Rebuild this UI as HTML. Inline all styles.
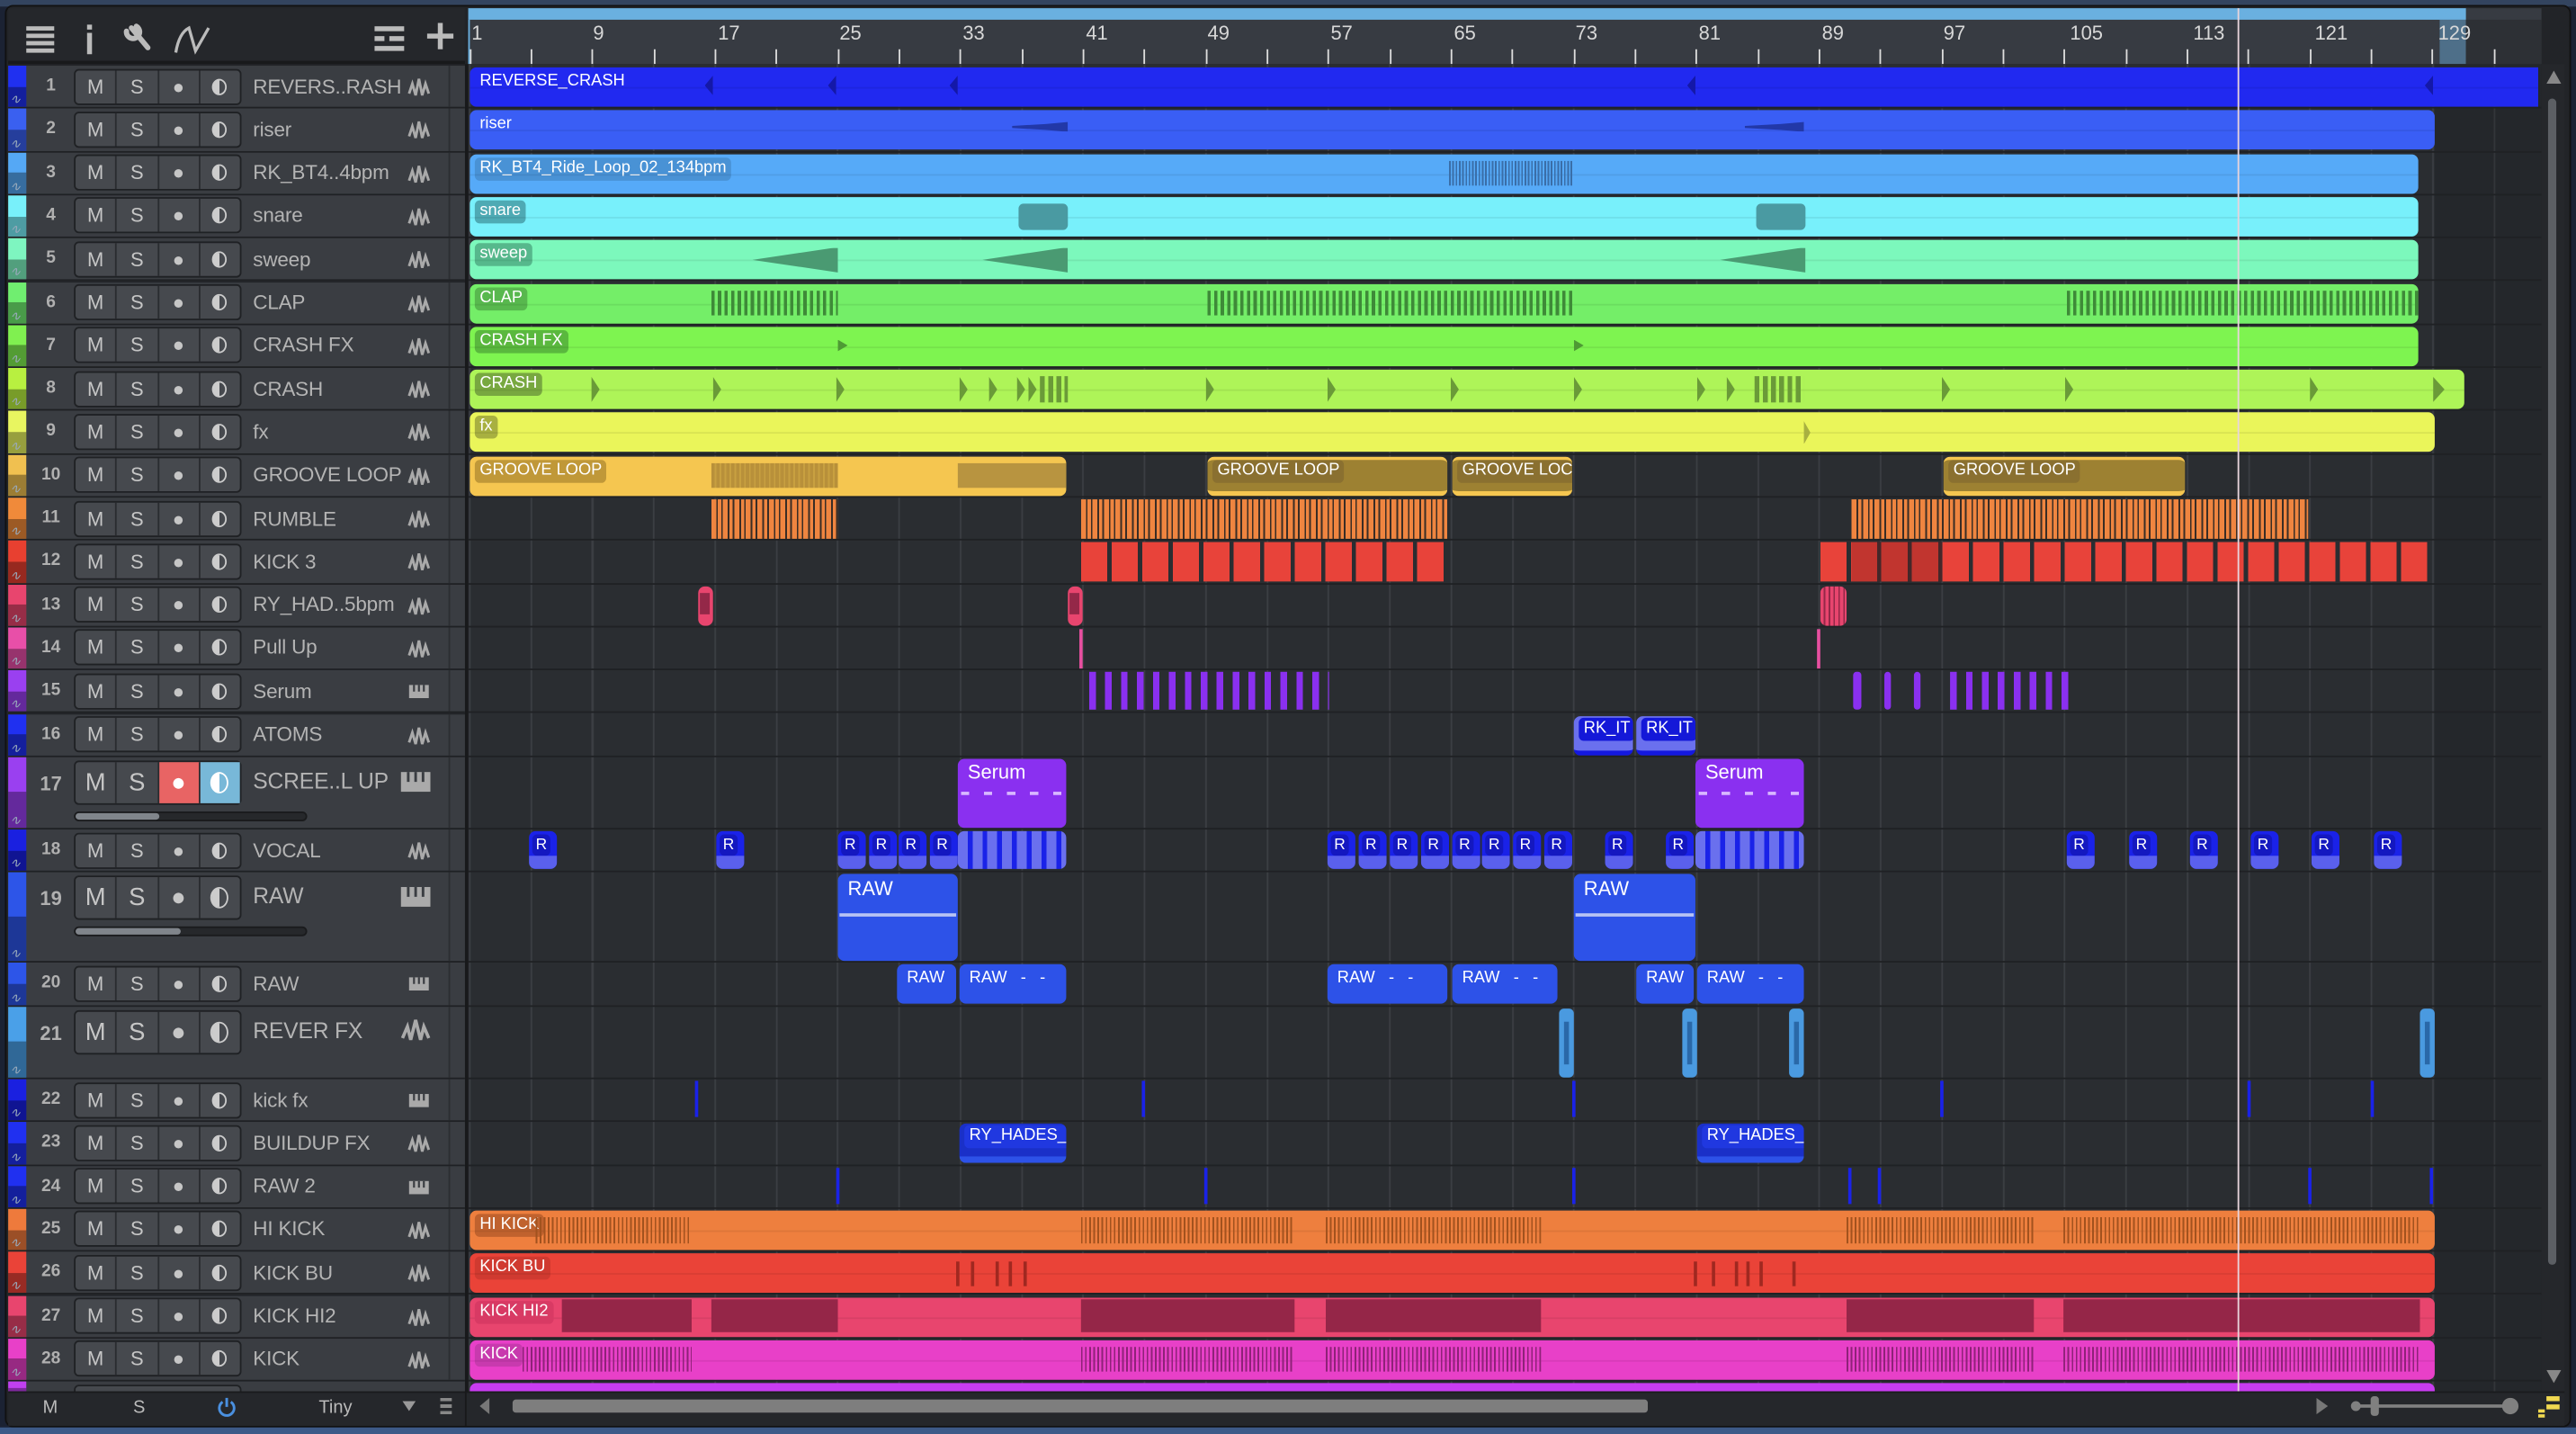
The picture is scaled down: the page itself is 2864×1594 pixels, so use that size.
<!DOCTYPE html>
<html><head><meta charset="utf-8"><style>
*{margin:0;padding:0;box-sizing:border-box}
html,body{width:2864px;height:1594px;overflow:hidden;background:#1b2233}
#s{position:absolute;left:0;top:0;width:1568px;height:873px;transform:scale(1.82653,1.82589);transform-origin:0 0;font-family:"Liberation Sans",sans-serif;overflow:hidden;background:#1b2233}
.a{position:absolute}
.h{position:absolute;left:5px;width:278px;height:26.3px;background:#3a3d42;border-bottom:1.5px solid #1f2124}
.cs{position:absolute;left:0;top:0;width:11px;height:100%}
.cs:after{content:"";position:absolute;left:0;bottom:0;width:11px;height:50%;background:rgba(0,0,0,.35)}
.cs b{position:absolute;left:1px;bottom:0;font-size:8px;color:#9ab;font-weight:normal;z-index:2;transform:skewX(-10deg)}
.n{position:absolute;left:11px;width:30px;top:6px;text-align:center;font-size:10.5px;color:#b0b0b0;font-weight:bold}
.bt{position:absolute;left:40px;top:1.5px;width:102px;height:22px;background:#46494e;border:1px solid #1f2124;border-radius:3px;display:flex}
.bt u{flex:1;text-decoration:none;border-right:1px solid #2a2c30;color:#c6c6c6;font-size:12px;text-align:center;line-height:20px;position:relative}
.bt u:last-child{border-right:0}
.mo{position:absolute;left:50%;top:50%;width:9px;height:10px;margin:-5px 0 0 -4.5px;border:1.4px solid #ccc;border-radius:50%;background:linear-gradient(90deg,#ccc 50%,transparent 50%)}
.big .mo{width:11px;height:13px;margin:-6.5px 0 0 -5.5px}
.nm{position:absolute;left:149px;top:5.5px;font-size:12.3px;color:#b4b4b4;white-space:nowrap;letter-spacing:-0.1px}
.ic{position:absolute;left:243px;top:7px}
.sep{position:absolute;left:268px;top:0;width:1px;height:100%;background:#2c2e32}
.big .bt{height:27px;top:2px}
.big .bt u{font-size:15px;line-height:25px}
.big .nm{font-size:13.5px;top:7px}
.big .n{font-size:12px;top:9px}
.sl{position:absolute;left:40px;width:142px;height:6px;background:#26282b;border:1px solid #1a1b1d;border-radius:3px}
.sl i{position:absolute;left:0;top:0;height:100%;background:#80858b;border-radius:3px}
.rw{position:absolute;left:285px;width:1262px;border-bottom:1.5px solid #1f2124}
.c{position:absolute;border-radius:4px;overflow:hidden}
.l{position:absolute;left:3px;top:2px;font-size:10px;color:#fff;padding:1px 3px;border-radius:3px;background:rgba(0,0,0,.14);white-space:nowrap;line-height:12px}
.w{position:absolute;top:18%;height:64%}
.mid{position:absolute;left:0;right:0;top:50%;height:1px;background:rgba(0,0,0,.07)}
.rul{position:absolute;font-size:12px;color:#d8d8d8;top:13px}
.tk{position:absolute;top:30px;width:1px;height:9px;background:#ddd}
.R{position:absolute;width:17px;height:23px;background:#1a22e8;border-radius:4px;overflow:hidden}
.R:before{content:"R";position:absolute;left:2px;top:2px;width:11px;height:13px;background:#1418c0;border-radius:3px;color:#fff;font-size:9.5px;text-align:center;line-height:13px}
.R:after{content:"";position:absolute;left:0;bottom:0;width:100%;height:8px;background:#6a70ee;opacity:.8}
.vl{position:absolute;width:2px;height:22px;background:#1a22e8}
</style></head><body><div id="s">
<div class="a" style="left:0;top:0;width:1568px;height:4px;background:#33445f"></div>
<div class="a" style="left:3px;top:3px;width:1562px;height:866px;background:#222428;border:1px solid #111;border-radius:5px"></div>
<div class="a" style="left:0;top:869px;width:1568px;height:4px;background:#3d5a88"></div>
<div class="a" style="left:5px;top:5px;width:278px;height:34px;background:#25272b;border-bottom:2px solid #18191b"></div>
<svg class="a" style="left:13px;top:14px" width="240" height="20" viewBox="0 0 240 20">
<g fill="#bbb"><rect x="3" y="2" width="17" height="2.6"/><rect x="3" y="6.5" width="17" height="2.6"/><rect x="3" y="11" width="17" height="2.6"/><rect x="3" y="15.5" width="17" height="2.6"/>
<rect x="40" y="6" width="3" height="13"/><rect x="40" y="1" width="3" height="3"/></g>
<path d="M67 3 L77 15 M64 5 a4 4 0 1 0 6 -3" stroke="#bbb" stroke-width="3.2" fill="none" stroke-linecap="round"/>
<path d="M94 18 Q96 6 102 3 L106 17 L114 3" stroke="#bbb" stroke-width="1.8" fill="none"/>
<g fill="#bbb"><rect x="215" y="2" width="18" height="3"/><rect x="215" y="8" width="6" height="3"/><rect x="224" y="8" width="9" height="3"/><rect x="215" y="14" width="18" height="3"/></g>
</svg>
<svg class="a" style="left:259px;top:13px" width="18" height="18"><path d="M9 1V17M1 9H17" stroke="#bbb" stroke-width="3"/></svg>
<div class="a" style="left:285px;top:5px;width:1262px;height:34px;background:#373b42"></div>
<div class="a" style="left:285px;top:5px;width:1216px;height:7px;background:#6ab0e0"></div>
<div class="a" style="left:285px;top:12px;width:1px;height:27px;background:#6ab0e0"></div>
<div class="a" style="left:1485px;top:12px;width:16px;height:27px;background:rgba(106,176,224,.45)"></div>
<div class="a" style="left:1501px;top:12px;width:46px;height:27px;background:#2d3035"></div>
<div class="rul" style="left:287px">1</div><div class="rul" style="left:361px">9</div><div class="rul" style="left:437px">17</div><div class="rul" style="left:511px">25</div><div class="rul" style="left:586px">33</div><div class="rul" style="left:661px">41</div><div class="rul" style="left:735px">49</div><div class="rul" style="left:810px">57</div><div class="rul" style="left:885px">65</div><div class="rul" style="left:959px">73</div><div class="rul" style="left:1034px">81</div><div class="rul" style="left:1109px">89</div><div class="rul" style="left:1183px">97</div><div class="rul" style="left:1260px">105</div><div class="rul" style="left:1335px">113</div><div class="rul" style="left:1409px">121</div><div class="rul" style="left:1484px">129</div>
<div class="tk" style="left:285.5px"></div><div class="tk" style="left:322.8px"></div><div class="tk" style="left:360.2px"></div><div class="tk" style="left:397.5px"></div><div class="tk" style="left:434.9px"></div><div class="tk" style="left:472.2px"></div><div class="tk" style="left:509.5px"></div><div class="tk" style="left:546.9px"></div><div class="tk" style="left:584.2px"></div><div class="tk" style="left:621.5px"></div><div class="tk" style="left:658.9px"></div><div class="tk" style="left:696.2px"></div><div class="tk" style="left:733.6px"></div><div class="tk" style="left:770.9px"></div><div class="tk" style="left:808.2px"></div><div class="tk" style="left:845.6px"></div><div class="tk" style="left:882.9px"></div><div class="tk" style="left:920.3px"></div><div class="tk" style="left:957.6px"></div><div class="tk" style="left:994.9px"></div><div class="tk" style="left:1032.3px"></div><div class="tk" style="left:1069.6px"></div><div class="tk" style="left:1107px"></div><div class="tk" style="left:1144.3px"></div><div class="tk" style="left:1181.6px"></div><div class="tk" style="left:1219px"></div><div class="tk" style="left:1256.3px"></div><div class="tk" style="left:1293.7px"></div><div class="tk" style="left:1331px"></div><div class="tk" style="left:1368.3px"></div><div class="tk" style="left:1405.7px"></div><div class="tk" style="left:1443px"></div><div class="tk" style="left:1480.4px"></div><div class="tk" style="left:1517.7px"></div>
<div class="a" style="left:285px;top:39px;width:1262px;height:808px;background:#2a2d31 repeating-linear-gradient(90deg,#3b3e43 0 1px,transparent 1px 37.34px);background-position:0.5px 0"></div>
<div class="a" style="left:1482px;top:39px;width:65px;height:808px;background:rgba(0,0,0,.12)"></div>
<div class="a" style="left:283px;top:39px;width:2px;height:808px;background:#18191b"></div>
<div class="rw" style="top:40px;height:26.3px"></div><div class="rw" style="top:66.3px;height:26.3px"></div><div class="rw" style="top:92.6px;height:26.3px"></div><div class="rw" style="top:118.9px;height:26.3px"></div><div class="rw" style="top:145.2px;height:26.3px"></div><div class="rw" style="top:171.5px;height:26.3px"></div><div class="rw" style="top:197.8px;height:26.3px"></div><div class="rw" style="top:224.1px;height:26.3px"></div><div class="rw" style="top:250.4px;height:26.3px"></div><div class="rw" style="top:276.7px;height:26.3px"></div><div class="rw" style="top:303px;height:26.3px"></div><div class="rw" style="top:329.3px;height:26.3px"></div><div class="rw" style="top:355.6px;height:26.3px"></div><div class="rw" style="top:381.9px;height:26.3px"></div><div class="rw" style="top:408.2px;height:26.3px"></div><div class="rw" style="top:434.5px;height:26.3px"></div><div class="rw" style="top:460.8px;height:44.2px"></div><div class="rw" style="top:505px;height:26.3px"></div><div class="rw" style="top:531.3px;height:55px"></div><div class="rw" style="top:586.3px;height:26.3px"></div><div class="rw" style="top:612.6px;height:44.4px"></div><div class="rw" style="top:657px;height:26.3px"></div><div class="rw" style="top:683.3px;height:26.3px"></div><div class="rw" style="top:709.6px;height:26.3px"></div><div class="rw" style="top:735.9px;height:26.3px"></div><div class="rw" style="top:762.2px;height:26.3px"></div><div class="rw" style="top:788.5px;height:26.3px"></div><div class="rw" style="top:814.8px;height:26.3px"></div>

<div class="c" style="left:286px;top:41px;width:1259px;height:24px;background:#2129f0;border-radius:4px 0 0 4px"><span class="l" style="background:none">REVERSE_CRASH</span><i class="mid"></i>
<i class="a" style="left:143px;top:5px;width:5px;height:12px;background:#1418a8;clip-path:polygon(100% 0,0 50%,100% 100%)"></i><i class="a" style="left:218px;top:5px;width:5px;height:12px;background:#1418a8;clip-path:polygon(100% 0,0 50%,100% 100%)"></i><i class="a" style="left:292px;top:5px;width:5px;height:12px;background:#1418a8;clip-path:polygon(100% 0,0 50%,100% 100%)"></i><i class="a" style="left:741px;top:5px;width:5px;height:12px;background:#1418a8;clip-path:polygon(100% 0,0 50%,100% 100%)"></i><i class="a" style="left:1190px;top:5px;width:5px;height:12px;background:#1418a8;clip-path:polygon(100% 0,0 50%,100% 100%)"></i></div>
<div class="c" style="left:286px;top:67.3px;width:1196px;height:24px;background:#3a5ef5"><span class="l" style="background:none">riser</span><i class="mid"></i><i class="a" style="left:330px;top:7px;width:34px;height:6px;background:#2238a8;clip-path:polygon(0 40%,60% 20%,100% 0,100% 100%,60% 80%,0 60%)"></i><i class="a" style="left:776px;top:7px;width:36px;height:6px;background:#2238a8;clip-path:polygon(0 40%,60% 20%,100% 0,100% 100%,60% 80%,0 60%)"></i></div>
<div class="c" style="left:286px;top:93.6px;width:1186px;height:24px;background:#56aaf8"><span class="l">RK_BT4_Ride_Loop_02_134bpm</span><i class="mid"></i><i class="w" style="left:596px;width:76px;background:repeating-linear-gradient(90deg,#3a6ea8 0 1px,transparent 1px 2px)"></i></div>
<div class="c" style="left:286px;top:119.9px;width:1186px;height:24px;background:#78f0fb"><span class="l" style="background:#4eaab4">snare</span><i class="mid"></i><i class="w" style="left:334px;width:30px;background:#4a9aa2;border-radius:3px"></i><i class="w" style="left:783px;width:30px;background:#4a9aa2;border-radius:3px"></i></div>
<div class="c" style="left:286px;top:146.2px;width:1186px;height:24px;background:#7cf8bc"><span class="l" style="background:#56b88c">sweep</span><i class="mid"></i><i class="w" style="left:172px;width:52px;background:#4a9a72;clip-path:polygon(0 50%,100% 0,100% 100%)"></i><i class="w" style="left:312px;width:52px;background:#4a9a72;clip-path:polygon(0 50%,100% 0,100% 100%)"></i><i class="w" style="left:761px;width:52px;background:#4a9a72;clip-path:polygon(0 50%,100% 0,100% 100%)"></i></div>
<div class="c" style="left:286px;top:172.5px;width:1186px;height:24px;background:#74ee68"><span class="l" style="background:#58b84e">CLAP</span><i class="mid"></i><i class="w" style="left:147px;width:77px;background:repeating-linear-gradient(90deg,#3e8a38 0 2px,transparent 2px 4px)"></i><i class="w" style="left:449px;width:223px;background:repeating-linear-gradient(90deg,#3e8a38 0 2px,transparent 2px 4px)"></i><i class="w" style="left:972px;width:214px;background:repeating-linear-gradient(90deg,#3e8a38 0 2px,transparent 2px 4px)"></i></div>
<div class="c" style="left:286px;top:198.8px;width:1186px;height:24px;background:#7ef450"><span class="l" style="background:#5ab83e">CRASH FX</span><i class="mid"></i><i class="a" style="left:224px;top:8px;width:6px;height:7px;background:#4e9a34;clip-path:polygon(0 0,100% 50%,0 100%)"></i><i class="a" style="left:672px;top:8px;width:6px;height:7px;background:#4e9a34;clip-path:polygon(0 0,100% 50%,0 100%)"></i></div>
<div class="c" style="left:286px;top:225.1px;width:1214px;height:24px;background:#aef458"><span class="l" style="background:#78a840">CRASH</span><i class="mid"></i>
<i class="w" style="left:74px;width:5px;background:#6a9a38;clip-path:polygon(0 0,100% 50%,0 100%)"></i><i class="w" style="left:148px;width:5px;background:#6a9a38;clip-path:polygon(0 0,100% 50%,0 100%)"></i><i class="w" style="left:223px;width:5px;background:#6a9a38;clip-path:polygon(0 0,100% 50%,0 100%)"></i><i class="w" style="left:298px;width:5px;background:#6a9a38;clip-path:polygon(0 0,100% 50%,0 100%)"></i><i class="w" style="left:316px;width:5px;background:#6a9a38;clip-path:polygon(0 0,100% 50%,0 100%)"></i><i class="w" style="left:333px;width:5px;background:#6a9a38;clip-path:polygon(0 0,100% 50%,0 100%)"></i><i class="w" style="left:340px;width:5px;background:#6a9a38;clip-path:polygon(0 0,100% 50%,0 100%)"></i><i class="w" style="left:347px;width:17px;background:repeating-linear-gradient(90deg,#6a9a38 0 3px,transparent 3px 5px)"></i><i class="w" style="left:448px;width:5px;background:#6a9a38;clip-path:polygon(0 0,100% 50%,0 100%)"></i><i class="w" style="left:522px;width:5px;background:#6a9a38;clip-path:polygon(0 0,100% 50%,0 100%)"></i><i class="w" style="left:597px;width:5px;background:#6a9a38;clip-path:polygon(0 0,100% 50%,0 100%)"></i><i class="w" style="left:672px;width:5px;background:#6a9a38;clip-path:polygon(0 0,100% 50%,0 100%)"></i><i class="w" style="left:747px;width:5px;background:#6a9a38;clip-path:polygon(0 0,100% 50%,0 100%)"></i><i class="w" style="left:765px;width:5px;background:#6a9a38;clip-path:polygon(0 0,100% 50%,0 100%)"></i><i class="w" style="left:782px;width:30px;background:repeating-linear-gradient(90deg,#6a9a38 0 3px,transparent 3px 5px)"></i><i class="w" style="left:896px;width:5px;background:#6a9a38;clip-path:polygon(0 0,100% 50%,0 100%)"></i><i class="w" style="left:971px;width:5px;background:#6a9a38;clip-path:polygon(0 0,100% 50%,0 100%)"></i><i class="w" style="left:1120px;width:5px;background:#6a9a38;clip-path:polygon(0 0,100% 50%,0 100%)"></i><i class="w" style="left:1195px;width:7px;background:#6a9a38;clip-path:polygon(0 0,100% 50%,0 100%)"></i></div>
<div class="c" style="left:286px;top:251.4px;width:1196px;height:24px;background:#eaf55a"><span class="l" style="background:#a8b040">fx</span><i class="mid"></i><i class="a" style="left:812px;top:5px;width:4px;height:14px;background:#a8b040;clip-path:polygon(0 0,100% 50%,0 100%)"></i></div>
<div class="c" style="left:286px;top:277.7px;width:363px;height:24px;background:#f5c650"><span class="l" style="background:#c09838">GROOVE LOOP</span><i class="w" style="left:147px;width:77px;background:repeating-linear-gradient(90deg,#b8903a 0 2px,#c8a040 2px 3px)"></i><i class="w" style="left:297px;width:66px;background:#b89440"></i></div>
<div class="c" style="left:735px;top:277.7px;width:146px;height:24px;background:#9d8132;border-top:2px solid #f5c650;border-bottom:3px solid #f5c650"><span class="l" style="background:#8a7030;top:0">GROOVE LOOP</span></div>
<div class="c" style="left:884px;top:277.7px;width:73px;height:24px;background:#9d8132;border-top:2px solid #f5c650;border-bottom:3px solid #f5c650"><span class="l" style="background:#8a7030;top:0">GROOVE LOC</span></div>
<div class="c" style="left:1183px;top:277.7px;width:147px;height:24px;background:#9d8132;border-top:2px solid #f5c650;border-bottom:3px solid #f5c650"><span class="l" style="background:#8a7030;top:0">GROOVE LOOP</span></div>
<div class="c" style="left:433px;top:304px;width:77px;height:24px;border-radius:0;background:repeating-linear-gradient(90deg,#ef8540 0 3px,#3a2d25 3px 4px,#ef8540 4px 6px,#3a2d25 6px 7px)"></div>
<div class="c" style="left:658px;top:304px;width:223px;height:24px;border-radius:0;background:repeating-linear-gradient(90deg,#ef8540 0 3px,#3a2d25 3px 4px,#ef8540 4px 6px,#3a2d25 6px 7px)"></div>
<div class="c" style="left:1127px;top:304px;width:278px;height:24px;border-radius:0;background:repeating-linear-gradient(90deg,#ef8540 0 3px,#3a2d25 3px 4px,#ef8540 4px 6px,#3a2d25 6px 7px)"></div>
<div class="c" style="left:658px;top:330.3px;width:223px;height:24px;border-radius:0;background:repeating-linear-gradient(90deg,#e8433a 0 16px,#2a2d31 16px 18.6px)"></div>
<div class="c" style="left:1108px;top:330.3px;width:372px;height:24px;border-radius:0;background:repeating-linear-gradient(90deg,#e8433a 0 16px,#2a2d31 16px 18.6px)"></div>
<div class="c" style="left:1127px;top:330.3px;width:55px;height:24px;border-radius:0;background:rgba(120,30,30,.35)"></div>
<div class="c" style="left:425px;top:356.6px;width:9px;height:24px;background:#e8456e"><i class="a" style="left:1px;top:4px;width:6px;height:13px;background:#942848"></i></div>
<div class="c" style="left:650px;top:356.6px;width:9px;height:24px;background:#e8456e"><i class="a" style="left:1px;top:4px;width:6px;height:13px;background:#942848"></i></div>
<div class="c" style="left:1108px;top:356.6px;width:16px;height:24px;background:repeating-linear-gradient(90deg,#e8456e 0 2px,#942848 2px 3px)"></div>
<div class="a" style="left:657px;top:383px;width:2px;height:24px;background:#e84fa0"></div>
<div class="a" style="left:1106px;top:383px;width:2px;height:24px;background:#e84fa0"></div>
<div class="a" style="left:663px;top:409.2px;width:146px;height:23px;background:repeating-linear-gradient(90deg,#8a30f0 0 4px,transparent 4px 9.7px)"></div>
<div class="a" style="left:1128px;top:409.2px;width:5px;height:23px;background:#8a30f0;border-radius:2px"></div>
<div class="a" style="left:1147px;top:409.2px;width:4px;height:23px;background:#8a30f0;border-radius:2px"></div>
<div class="a" style="left:1165px;top:409.2px;width:4px;height:23px;background:#8a30f0;border-radius:2px"></div>
<div class="a" style="left:1187px;top:409.2px;width:72px;height:23px;background:repeating-linear-gradient(90deg,#8a30f0 0 4px,transparent 4px 9.7px)"></div>
<div class="c" style="left:958px;top:435.5px;width:36px;height:24px;background:#6a70ee;border-bottom:3px solid #1418e0"><span class="l" style="background:#1418d8;top:1px;font-size:10px">RK_IT</span></div>
<div class="c" style="left:996px;top:435.5px;width:36px;height:24px;background:#6a70ee;border-bottom:3px solid #1418e0"><span class="l" style="background:#1418d8;top:1px;font-size:10px">RK_IT</span></div>
<div class="c" style="left:583px;top:461.8px;width:66px;height:42px;background:#8a30f0"><span class="l" style="background:none;font-size:12px;top:1px">Serum</span><i class="a" style="left:2px;top:20px;width:62px;height:2px;background:repeating-linear-gradient(90deg,#d8b8ff 0 5px,transparent 5px 14px)"></i></div>
<div class="c" style="left:1032px;top:461.8px;width:66px;height:42px;background:#8a30f0"><span class="l" style="background:none;font-size:12px;top:1px">Serum</span><i class="a" style="left:2px;top:20px;width:62px;height:2px;background:repeating-linear-gradient(90deg,#d8b8ff 0 5px,transparent 5px 14px)"></i></div>
<div class="R" style="left:322px;top:506px"></div><div class="R" style="left:436px;top:506px"></div><div class="R" style="left:510px;top:506px"></div><div class="R" style="left:529px;top:506px"></div><div class="R" style="left:547px;top:506px"></div><div class="R" style="left:566px;top:506px"></div>
<div class="c" style="left:583px;top:506px;width:66px;height:23px;background:repeating-linear-gradient(90deg,#6a70ee 0 6px,#1a22e8 6px 9px)"></div>
<div class="R" style="left:808px;top:506px"></div><div class="R" style="left:827px;top:506px"></div><div class="R" style="left:846px;top:506px"></div><div class="R" style="left:865px;top:506px"></div><div class="R" style="left:884px;top:506px"></div><div class="R" style="left:902px;top:506px"></div><div class="R" style="left:921px;top:506px"></div><div class="R" style="left:940px;top:506px"></div><div class="R" style="left:977px;top:506px"></div><div class="R" style="left:1014px;top:506px"></div>
<div class="c" style="left:1032px;top:506px;width:66px;height:23px;background:repeating-linear-gradient(90deg,#6a70ee 0 6px,#1a22e8 6px 9px)"></div>
<div class="R" style="left:1258px;top:506px"></div><div class="R" style="left:1296px;top:506px"></div><div class="R" style="left:1333px;top:506px"></div><div class="R" style="left:1370px;top:506px"></div><div class="R" style="left:1407px;top:506px"></div><div class="R" style="left:1445px;top:506px"></div>
<div class="c" style="left:510px;top:532.3px;width:73px;height:53px;background:#2d52e8"><span class="l" style="background:none;font-size:12px;top:2px;left:3px">RAW</span><i class="a" style="left:1px;top:24px;width:71px;height:2px;background:#b8c4f4"></i></div>
<div class="c" style="left:958px;top:532.3px;width:74px;height:53px;background:#2d52e8"><span class="l" style="background:none;font-size:12px;top:2px;left:3px">RAW</span><i class="a" style="left:1px;top:24px;width:72px;height:2px;background:#b8c4f4"></i></div>
<div class="c" style="left:546px;top:587.3px;width:36px;height:24px;background:#2d52e8"><span class="l" style="background:none">RAW</span></div>
<div class="c" style="left:584px;top:587.3px;width:65px;height:24px;background:#2d52e8"><span class="l" style="background:none">RAW &nbsp;&nbsp;-&nbsp;&nbsp;&nbsp;-</span></div>
<div class="c" style="left:808px;top:587.3px;width:73px;height:24px;background:#2d52e8"><span class="l" style="background:none">RAW &nbsp;&nbsp;-&nbsp;&nbsp;&nbsp;-</span></div>
<div class="c" style="left:884px;top:587.3px;width:64px;height:24px;background:#2d52e8"><span class="l" style="background:none">RAW &nbsp;&nbsp;-&nbsp;&nbsp;&nbsp;-</span></div>
<div class="c" style="left:996px;top:587.3px;width:35px;height:24px;background:#2d52e8"><span class="l" style="background:none">RAW</span></div>
<div class="c" style="left:1033px;top:587.3px;width:65px;height:24px;background:#2d52e8"><span class="l" style="background:none">RAW &nbsp;&nbsp;-&nbsp;&nbsp;&nbsp;-</span></div>
<div class="c" style="left:949px;top:614px;width:9px;height:42px;background:#4a9ae0;border-radius:3px"><i class="a" style="left:3px;top:8px;width:3px;height:26px;background:#2a68a8"></i></div>
<div class="c" style="left:1024px;top:614px;width:9px;height:42px;background:#4a9ae0;border-radius:3px"><i class="a" style="left:3px;top:8px;width:3px;height:26px;background:#2a68a8"></i></div>
<div class="c" style="left:1089px;top:614px;width:9px;height:42px;background:#4a9ae0;border-radius:3px"><i class="a" style="left:3px;top:8px;width:3px;height:26px;background:#2a68a8"></i></div>
<div class="c" style="left:1473px;top:614px;width:9px;height:42px;background:#4a9ae0;border-radius:3px"><i class="a" style="left:3px;top:8px;width:3px;height:26px;background:#2a68a8"></i></div>
<div class="vl" style="left:423px;top:658px"></div><div class="vl" style="left:695px;top:658px"></div><div class="vl" style="left:957px;top:658px"></div><div class="vl" style="left:1181px;top:658px"></div><div class="vl" style="left:1368px;top:658px"></div><div class="vl" style="left:1443px;top:658px"></div>
<div class="c" style="left:584px;top:684.3px;width:65px;height:24px;background:#1a30c8;border-bottom:4px solid #2d52e8"><span class="l" style="background:#2038e0;top:1px">RY_HADES_</span></div>
<div class="c" style="left:1033px;top:684.3px;width:65px;height:24px;background:#1a30c8;border-bottom:4px solid #2d52e8"><span class="l" style="background:#2038e0;top:1px">RY_HADES_</span></div>
<div class="vl" style="left:509px;top:711px"></div><div class="vl" style="left:733px;top:711px"></div><div class="vl" style="left:957px;top:711px"></div><div class="vl" style="left:1125px;top:711px"></div><div class="vl" style="left:1143px;top:711px"></div><div class="vl" style="left:1405px;top:711px"></div><div class="vl" style="left:1479px;top:711px"></div>
<div class="c" style="left:286px;top:736.9px;width:1196px;height:24px;background:#ee7f3e"><span class="l" style="background:#c0622e">HI KICK</span><i class="mid"></i>
<i class="w" style="left:40px;width:95px;background:repeating-linear-gradient(90deg,#a2521e 0 1px,transparent 1px 2.5px)"></i><i class="w" style="left:372px;width:130px;background:repeating-linear-gradient(90deg,#a2521e 0 1px,transparent 1px 2.5px)"></i><i class="w" style="left:521px;width:131px;background:repeating-linear-gradient(90deg,#a2521e 0 1px,transparent 1px 2.5px)"></i><i class="w" style="left:838px;width:114px;background:repeating-linear-gradient(90deg,#a2521e 0 1px,transparent 1px 2.5px)"></i><i class="w" style="left:970px;width:217px;background:repeating-linear-gradient(90deg,#a2521e 0 1px,transparent 1px 2.5px)"></i></div>
<div class="c" style="left:286px;top:763.2px;width:1196px;height:24px;background:#ea4338"><span class="l" style="background:#d03a30">KICK BU</span><i class="mid"></i>
<i class="w" style="left:296px;width:2px;background:#a02820"></i><i class="w" style="left:305px;width:2px;background:#a02820"></i><i class="w" style="left:320px;width:2px;background:#a02820"></i><i class="w" style="left:328px;width:2px;background:#a02820"></i><i class="w" style="left:337px;width:2px;background:#a02820"></i><i class="w" style="left:745px;width:2px;background:#a02820"></i><i class="w" style="left:756px;width:2px;background:#a02820"></i><i class="w" style="left:770px;width:2px;background:#a02820"></i><i class="w" style="left:777px;width:2px;background:#a02820"></i><i class="w" style="left:785px;width:2px;background:#a02820"></i><i class="w" style="left:805px;width:2px;background:#a02820"></i></div>
<div class="c" style="left:286px;top:789.5px;width:1196px;height:24px;background:#e8456e"><i class="mid"></i>
<i class="w" style="left:56px;width:79px;background:#952648;top:8%;height:80%"></i><i class="w" style="left:147px;width:77px;background:#952648;top:8%;height:80%"></i><i class="w" style="left:372px;width:130px;background:#952648;top:8%;height:80%"></i><i class="w" style="left:521px;width:131px;background:#952648;top:8%;height:80%"></i><i class="w" style="left:838px;width:114px;background:#952648;top:8%;height:80%"></i><i class="w" style="left:970px;width:217px;background:#952648;top:8%;height:80%"></i><span class="l" style="background:#d83a64">KICK HI2</span></div>
<div class="c" style="left:286px;top:815.8px;width:1196px;height:24px;background:#e840c8"><span class="l" style="background:#c83aae">KICK</span><i class="mid"></i>
<i class="w" style="left:32px;width:103px;background:repeating-linear-gradient(90deg,#8e2278 0 1px,transparent 1px 2.5px)"></i><i class="w" style="left:372px;width:130px;background:repeating-linear-gradient(90deg,#8e2278 0 1px,transparent 1px 2.5px)"></i><i class="w" style="left:521px;width:131px;background:repeating-linear-gradient(90deg,#8e2278 0 1px,transparent 1px 2.5px)"></i><i class="w" style="left:838px;width:114px;background:repeating-linear-gradient(90deg,#8e2278 0 1px,transparent 1px 2.5px)"></i><i class="w" style="left:970px;width:217px;background:repeating-linear-gradient(90deg,#8e2278 0 1px,transparent 1px 2.5px)"></i></div>
<div class="c" style="left:286px;top:842px;width:1196px;height:10px;background:#c83cf0"></div>
<div class="a" style="left:1361.5px;top:5px;width:1px;height:842px;background:#e8d4dc"></div>
<div class="a" style="left:1547px;top:39px;width:14px;height:808px;background:#25272b"></div>
<div class="a" style="left:1550px;top:43px;width:9px;height:8px;background:#888;clip-path:polygon(50% 0,100% 100%,0 100%)"></div>
<div class="a" style="left:1551px;top:60px;width:5px;height:710px;background:#5c5f64;border-radius:3px"></div>
<div class="a" style="left:1550px;top:834px;width:9px;height:8px;background:#888;clip-path:polygon(0 0,100% 0,50% 100%)"></div>

<div class="h" style="top:40px"><i class="cs" style="background:#2030f0"><b>∿</b></i><b class="n">1</b><span class="bt"><u>M</u><u>S</u><u>●</u><u><i class="mo"></i></u></span><span class="nm">REVERS..RASH</span><svg class="ic" width="14" height="12"><path d="M1 10L3 4L5 11L7 1L9 11L11 4L13 10" stroke="#aaa" fill="none" stroke-width="1.6"/></svg><i class="sep"></i></div>
<div class="h" style="top:66.3px"><i class="cs" style="background:#3a60f0"><b>∿</b></i><b class="n">2</b><span class="bt"><u>M</u><u>S</u><u>●</u><u><i class="mo"></i></u></span><span class="nm">riser</span><svg class="ic" width="14" height="12"><path d="M1 10L3 4L5 11L7 1L9 11L11 4L13 10" stroke="#aaa" fill="none" stroke-width="1.6"/></svg><i class="sep"></i></div>
<div class="h" style="top:92.6px"><i class="cs" style="background:#55a8f5"><b>∿</b></i><b class="n">3</b><span class="bt"><u>M</u><u>S</u><u>●</u><u><i class="mo"></i></u></span><span class="nm">RK_BT4..4bpm</span><svg class="ic" width="14" height="12"><path d="M1 10L3 4L5 11L7 1L9 11L11 4L13 10" stroke="#aaa" fill="none" stroke-width="1.6"/></svg><i class="sep"></i></div>
<div class="h" style="top:118.9px"><i class="cs" style="background:#78f0fa"><b>∿</b></i><b class="n">4</b><span class="bt"><u>M</u><u>S</u><u>●</u><u><i class="mo"></i></u></span><span class="nm">snare</span><svg class="ic" width="14" height="12"><path d="M1 10L3 4L5 11L7 1L9 11L11 4L13 10" stroke="#aaa" fill="none" stroke-width="1.6"/></svg><i class="sep"></i></div>
<div class="h" style="top:145.2px"><i class="cs" style="background:#7ef5c0"><b>∿</b></i><b class="n">5</b><span class="bt"><u>M</u><u>S</u><u>●</u><u><i class="mo"></i></u></span><span class="nm">sweep</span><svg class="ic" width="14" height="12"><path d="M1 10L3 4L5 11L7 1L9 11L11 4L13 10" stroke="#aaa" fill="none" stroke-width="1.6"/></svg><i class="sep"></i></div>
<div class="h" style="top:171.5px"><i class="cs" style="background:#70ee70"><b>∿</b></i><b class="n">6</b><span class="bt"><u>M</u><u>S</u><u>●</u><u><i class="mo"></i></u></span><span class="nm">CLAP</span><svg class="ic" width="14" height="12"><path d="M1 10L3 4L5 11L7 1L9 11L11 4L13 10" stroke="#aaa" fill="none" stroke-width="1.6"/></svg><i class="sep"></i></div>
<div class="h" style="top:197.8px"><i class="cs" style="background:#80f050"><b>∿</b></i><b class="n">7</b><span class="bt"><u>M</u><u>S</u><u>●</u><u><i class="mo"></i></u></span><span class="nm">CRASH FX</span><svg class="ic" width="14" height="12"><path d="M1 10L3 4L5 11L7 1L9 11L11 4L13 10" stroke="#aaa" fill="none" stroke-width="1.6"/></svg><i class="sep"></i></div>
<div class="h" style="top:224.1px"><i class="cs" style="background:#b8f040"><b>∿</b></i><b class="n">8</b><span class="bt"><u>M</u><u>S</u><u>●</u><u><i class="mo"></i></u></span><span class="nm">CRASH</span><svg class="ic" width="14" height="12"><path d="M1 10L3 4L5 11L7 1L9 11L11 4L13 10" stroke="#aaa" fill="none" stroke-width="1.6"/></svg><i class="sep"></i></div>
<div class="h" style="top:250.4px"><i class="cs" style="background:#e8f560"><b>∿</b></i><b class="n">9</b><span class="bt"><u>M</u><u>S</u><u>●</u><u><i class="mo"></i></u></span><span class="nm">fx</span><svg class="ic" width="14" height="12"><path d="M1 10L3 4L5 11L7 1L9 11L11 4L13 10" stroke="#aaa" fill="none" stroke-width="1.6"/></svg><i class="sep"></i></div>
<div class="h" style="top:276.7px"><i class="cs" style="background:#f0c050"><b>∿</b></i><b class="n">10</b><span class="bt"><u>M</u><u>S</u><u>●</u><u><i class="mo"></i></u></span><span class="nm">GROOVE LOOP</span><svg class="ic" width="14" height="12"><path d="M1 10L3 4L5 11L7 1L9 11L11 4L13 10" stroke="#aaa" fill="none" stroke-width="1.6"/></svg><i class="sep"></i></div>
<div class="h" style="top:303px"><i class="cs" style="background:#f08a3a"><b>∿</b></i><b class="n">11</b><span class="bt"><u>M</u><u>S</u><u>●</u><u><i class="mo"></i></u></span><span class="nm">RUMBLE</span><svg class="ic" width="14" height="12"><path d="M1 10L3 4L5 11L7 1L9 11L11 4L13 10" stroke="#aaa" fill="none" stroke-width="1.6"/></svg><i class="sep"></i></div>
<div class="h" style="top:329.3px"><i class="cs" style="background:#e84030"><b>∿</b></i><b class="n">12</b><span class="bt"><u>M</u><u>S</u><u>●</u><u><i class="mo"></i></u></span><span class="nm">KICK 3</span><svg class="ic" width="14" height="12"><path d="M1 10L3 4L5 11L7 1L9 11L11 4L13 10" stroke="#aaa" fill="none" stroke-width="1.6"/></svg><i class="sep"></i></div>
<div class="h" style="top:355.6px"><i class="cs" style="background:#e8456e"><b>∿</b></i><b class="n">13</b><span class="bt"><u>M</u><u>S</u><u>●</u><u><i class="mo"></i></u></span><span class="nm">RY_HAD..5bpm</span><svg class="ic" width="14" height="12"><path d="M1 10L3 4L5 11L7 1L9 11L11 4L13 10" stroke="#aaa" fill="none" stroke-width="1.6"/></svg><i class="sep"></i></div>
<div class="h" style="top:381.9px"><i class="cs" style="background:#e84fa8"><b>∿</b></i><b class="n">14</b><span class="bt"><u>M</u><u>S</u><u>●</u><u><i class="mo"></i></u></span><span class="nm">Pull Up</span><svg class="ic" width="14" height="12"><path d="M1 10L3 4L5 11L7 1L9 11L11 4L13 10" stroke="#aaa" fill="none" stroke-width="1.6"/></svg><i class="sep"></i></div>
<div class="h" style="top:408.2px"><i class="cs" style="background:#9a40f0"><b>∿</b></i><b class="n">15</b><span class="bt"><u>M</u><u>S</u><u>●</u><u><i class="mo"></i></u></span><span class="nm">Serum</span><svg class="ic" width="14" height="12"><rect x="1" y="2" width="12" height="8" fill="#aaa"/><path d="M4 2V6M7 2V6M10 2V6" stroke="#3a3d42" stroke-width="1.2"/></svg><i class="sep"></i></div>
<div class="h" style="top:434.5px"><i class="cs" style="background:#2030f0"><b>∿</b></i><b class="n">16</b><span class="bt"><u>M</u><u>S</u><u>●</u><u><i class="mo"></i></u></span><span class="nm">ATOMS</span><svg class="ic" width="14" height="12"><path d="M1 10L3 4L5 11L7 1L9 11L11 4L13 10" stroke="#aaa" fill="none" stroke-width="1.6"/></svg><i class="sep"></i></div>
<div class="h big" style="top:460.8px;height:44.2px"><i class="cs" style="background:#9a40f0"><b>∿</b></i><b class="n">17</b><span class="bt"><u>M</u><u>S</u><u style="background:#e86464;color:#fff">●</u><u style="background:#78b8d8"><i class="mo" style="border-color:#fff;background:linear-gradient(90deg,#fff 50%,transparent 50%)"></i></u></span><span class="nm">SCREE..L UP</span><svg class="ic" width="18" height="14" style="left:239px;top:8px"><rect x="0" y="1" width="18" height="12" fill="#aaa"/><path d="M4.5 1V7M9 1V7M13.5 1V7" stroke="#3a3d42" stroke-width="1.6"/></svg><div class="sl" style="top:33px"><i style="width:51px"></i></div><i class="sep"></i></div>
<div class="h" style="top:505px"><i class="cs" style="background:#1a20e0"><b>∿</b></i><b class="n">18</b><span class="bt"><u>M</u><u>S</u><u>●</u><u><i class="mo"></i></u></span><span class="nm">VOCAL</span><svg class="ic" width="14" height="12"><path d="M1 10L3 4L5 11L7 1L9 11L11 4L13 10" stroke="#aaa" fill="none" stroke-width="1.6"/></svg><i class="sep"></i></div>
<div class="h big" style="top:531.3px;height:55px"><i class="cs" style="background:#2d55e8"><b>∿</b></i><b class="n">19</b><span class="bt"><u>M</u><u>S</u><u>●</u><u><i class="mo"></i></u></span><span class="nm">RAW</span><svg class="ic" width="18" height="14" style="left:239px;top:8px"><rect x="0" y="1" width="18" height="12" fill="#aaa"/><path d="M4.5 1V7M9 1V7M13.5 1V7" stroke="#3a3d42" stroke-width="1.6"/></svg><div class="sl" style="top:33px"><i style="width:64px"></i></div><i class="sep"></i></div>
<div class="h" style="top:586.3px"><i class="cs" style="background:#2d55e8"><b>∿</b></i><b class="n">20</b><span class="bt"><u>M</u><u>S</u><u>●</u><u><i class="mo"></i></u></span><span class="nm">RAW</span><svg class="ic" width="14" height="12"><rect x="1" y="2" width="12" height="8" fill="#aaa"/><path d="M4 2V6M7 2V6M10 2V6" stroke="#3a3d42" stroke-width="1.2"/></svg><i class="sep"></i></div>
<div class="h big" style="top:612.6px;height:44.4px"><i class="cs" style="background:#4aa0e8"><b>∿</b></i><b class="n">21</b><span class="bt"><u>M</u><u>S</u><u>●</u><u><i class="mo"></i></u></span><span class="nm">REVER FX</span><svg class="ic" width="18" height="14" style="left:239px;top:7px"><path d="M1 12L4 5L6 13L9 1L12 13L14 5L17 12" stroke="#aaa" fill="none" stroke-width="2"/></svg><i class="sep"></i></div>
<div class="h" style="top:657px"><i class="cs" style="background:#1a20e0"><b>∿</b></i><b class="n">22</b><span class="bt"><u>M</u><u>S</u><u>●</u><u><i class="mo"></i></u></span><span class="nm">kick fx</span><svg class="ic" width="14" height="12"><rect x="1" y="2" width="12" height="8" fill="#aaa"/><path d="M4 2V6M7 2V6M10 2V6" stroke="#3a3d42" stroke-width="1.2"/></svg><i class="sep"></i></div>
<div class="h" style="top:683.3px"><i class="cs" style="background:#2030f0"><b>∿</b></i><b class="n">23</b><span class="bt"><u>M</u><u>S</u><u>●</u><u><i class="mo"></i></u></span><span class="nm">BUILDUP FX</span><svg class="ic" width="14" height="12"><path d="M1 10L3 4L5 11L7 1L9 11L11 4L13 10" stroke="#aaa" fill="none" stroke-width="1.6"/></svg><i class="sep"></i></div>
<div class="h" style="top:709.6px"><i class="cs" style="background:#2030f0"><b>∿</b></i><b class="n">24</b><span class="bt"><u>M</u><u>S</u><u>●</u><u><i class="mo"></i></u></span><span class="nm">RAW 2</span><svg class="ic" width="14" height="12"><rect x="1" y="2" width="12" height="8" fill="#aaa"/><path d="M4 2V6M7 2V6M10 2V6" stroke="#3a3d42" stroke-width="1.2"/></svg><i class="sep"></i></div>
<div class="h" style="top:735.9px"><i class="cs" style="background:#ee7a3c"><b>∿</b></i><b class="n">25</b><span class="bt"><u>M</u><u>S</u><u>●</u><u><i class="mo"></i></u></span><span class="nm">HI KICK</span><svg class="ic" width="14" height="12"><path d="M1 10L3 4L5 11L7 1L9 11L11 4L13 10" stroke="#aaa" fill="none" stroke-width="1.6"/></svg><i class="sep"></i></div>
<div class="h" style="top:762.2px"><i class="cs" style="background:#ea4338"><b>∿</b></i><b class="n">26</b><span class="bt"><u>M</u><u>S</u><u>●</u><u><i class="mo"></i></u></span><span class="nm">KICK BU</span><svg class="ic" width="14" height="12"><path d="M1 10L3 4L5 11L7 1L9 11L11 4L13 10" stroke="#aaa" fill="none" stroke-width="1.6"/></svg><i class="sep"></i></div>
<div class="h" style="top:788.5px"><i class="cs" style="background:#e8456e"><b>∿</b></i><b class="n">27</b><span class="bt"><u>M</u><u>S</u><u>●</u><u><i class="mo"></i></u></span><span class="nm">KICK HI2</span><svg class="ic" width="14" height="12"><path d="M1 10L3 4L5 11L7 1L9 11L11 4L13 10" stroke="#aaa" fill="none" stroke-width="1.6"/></svg><i class="sep"></i></div>
<div class="h" style="top:814.8px"><i class="cs" style="background:#e840c8"><b>∿</b></i><b class="n">28</b><span class="bt"><u>M</u><u>S</u><u>●</u><u><i class="mo"></i></u></span><span class="nm">KICK</span><svg class="ic" width="14" height="12"><path d="M1 10L3 4L5 11L7 1L9 11L11 4L13 10" stroke="#aaa" fill="none" stroke-width="1.6"/></svg><i class="sep"></i></div>
<div class="h" style="top:841.1px;height:8px"><i class="cs" style="background:#c040f0"></i><span class="bt" style="height:8px"></span></div>

<div class="a" style="left:5px;top:847px;width:1556px;height:21px;background:#25272b;border-top:1px solid #1a1b1d"></div>
<div class="a" style="left:283px;top:847px;width:1px;height:21px;background:#18191b"></div>
<div class="a" style="left:26px;top:851px;font-size:11px;color:#bbb">M</div>
<div class="a" style="left:81px;top:851px;font-size:11px;color:#bbb">S</div>
<svg class="a" style="left:132px;top:850px" width="12" height="13"><path d="M3.5 3.5A4.5 4.5 0 1 0 8.5 3.5" stroke="#4a90e0" stroke-width="1.6" fill="none"/><path d="M6 1V6.5" stroke="#4a90e0" stroke-width="1.6"/></svg>
<div class="a" style="left:194px;top:851px;font-size:11px;color:#bbb">Tiny</div>
<div class="a" style="left:245px;top:853px;width:8px;height:6px;background:#999;clip-path:polygon(0 0,100% 0,50% 100%)"></div>
<div class="a" style="left:268px;top:851px;width:7px;height:10px;background:repeating-linear-gradient(#888 0 2px,transparent 2px 4px)"></div>
<div class="a" style="left:292px;top:851px;width:6px;height:10px;background:#777;clip-path:polygon(100% 0,0 50%,100% 100%)"></div>
<div class="a" style="left:312px;top:852px;width:691px;height:8px;background:#7e7e7e;border-radius:2px"></div>
<div class="a" style="left:1410px;top:851px;width:7px;height:10px;background:#777;clip-path:polygon(0 0,100% 50%,0 100%)"></div>
<div class="a" style="left:1433px;top:855px;width:96px;height:2px;background:#808080"></div>
<div class="a" style="left:1431px;top:853px;width:6px;height:6px;border-radius:50%;background:#808080"></div>
<div class="a" style="left:1443px;top:850px;width:5px;height:12px;border-radius:2px;background:#808080"></div>
<div class="a" style="left:1523px;top:851px;width:10px;height:10px;border-radius:50%;background:#808080"></div>
<div class="a" style="left:1550px;top:850px;width:8px;height:3px;background:#f0d850"></div><div class="a" style="left:1550px;top:855px;width:8px;height:3px;background:#f0d850"></div>
<div class="a" style="left:1545px;top:858px;width:4px;height:2px;background:#f0d850"></div><div class="a" style="left:1545px;top:861px;width:4px;height:2px;background:#f0d850"></div>
</div></body></html>
